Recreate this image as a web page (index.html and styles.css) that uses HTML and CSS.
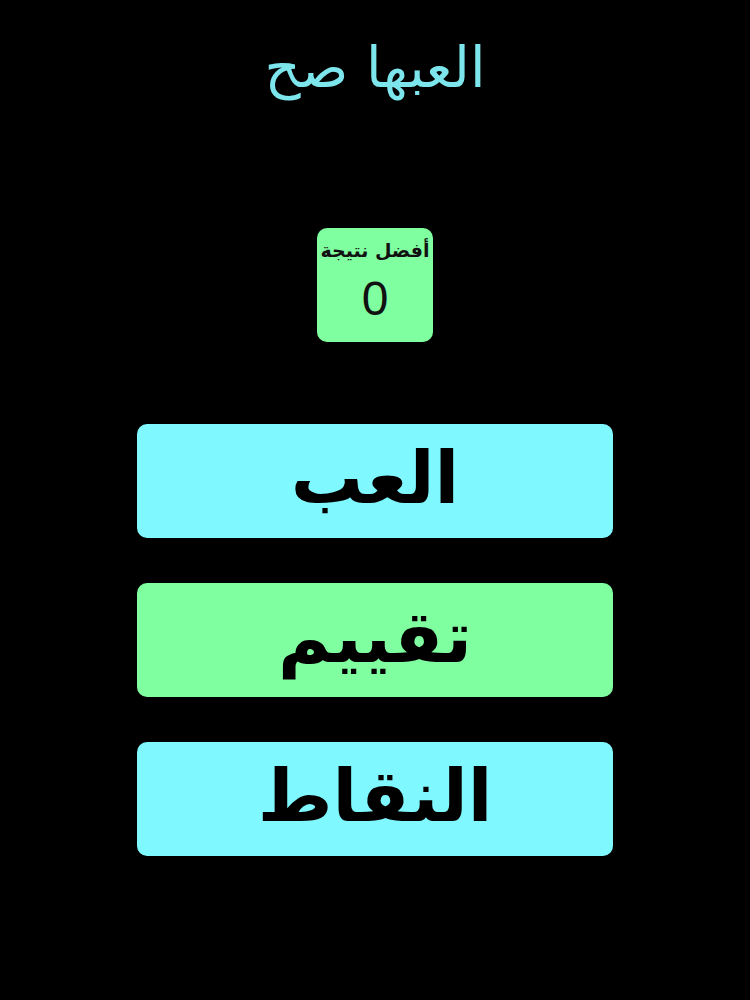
FILE: index.html
```html
<!DOCTYPE html>
<html lang="ar" dir="rtl">
<head>
<meta charset="utf-8">
<link rel="stylesheet" href="styles.css">
</head>
<body>
<main class="screen">
  <h1 class="title">العبها صح</h1>
  <section class="best">
    <div class="best-label">أفضل نتيجة</div>
    <div class="best-value">0</div>
  </section>
  <nav class="menu">
    <button class="btn btn-cyan">العب</button>
    <button class="btn btn-green">تقييم</button>
    <button class="btn btn-cyan">النقاط</button>
  </nav>
</main>
</body>
</html>
```

FILE: styles.css
```css
html, body {
  margin: 0;
  padding: 0;
  background: #000;
}
.screen {
  width: 750px;
  height: 1000px;
  display: flex;
  flex-direction: column;
  align-items: center;
  font-family: "DejaVu Sans", sans-serif;
}
.title {
  margin: 30px 0 0 0;
  height: 76px;
  line-height: 76px;
  font-size: 56px;
  font-weight: normal;
  color: #7de6ec;
}
.best {
  margin-top: 122px;
  width: 116px;
  height: 114px;
  border-radius: 10px;
  background: #80ffa0;
  display: flex;
  flex-direction: column;
  align-items: center;
  color: #111;
}
.best-label {
  margin-top: 8px;
  font-size: 19px;
  font-weight: bold;
  line-height: 28px;
  white-space: nowrap;
}
.best-value {
  font-family: "Liberation Sans", sans-serif;
  font-size: 48px;
  line-height: 56px;
  margin-top: 7px;
}
.menu {
  margin-top: 82px;
  display: flex;
  flex-direction: column;
  gap: 45px;
}
.btn {
  width: 476px;
  height: 114px;
  border: none;
  border-radius: 10px;
  font-family: "DejaVu Sans", sans-serif;
  font-size: 72px;
  font-weight: bold;
  line-height: 1;
  color: #000;
  padding: 0 0 6px 0;
}
.btn-cyan { background: #80f8ff; }
.btn-green { background: #80ffa0; }
```
